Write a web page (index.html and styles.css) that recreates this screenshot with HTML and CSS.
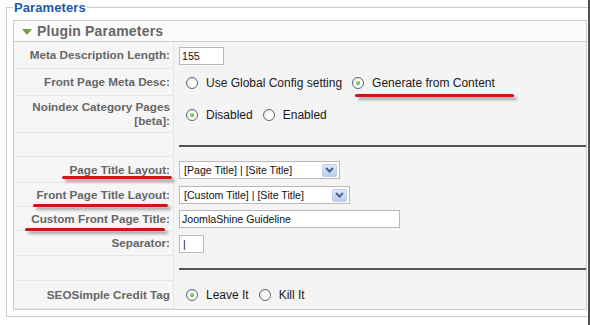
FILE: index.html
```html
<!DOCTYPE html>
<html>
<head>
<meta charset="utf-8">
<link rel="stylesheet" href="styles.css">
</head>
<body>
<div class="page">
  <fieldset class="params">
    <legend>Parameters</legend>
    <div class="panel">
      <div class="panel-title"><span class="tri"></span>Plugin Parameters</div>
      <div class="plist">
        <div class="key">Meta Description Length:</div>
        <div class="val"><span class="field w-len">155</span></div>

        <div class="key">Front Page Meta Desc:</div>
        <div class="val">
          <span class="radio"></span><span class="opt">Use Global Config setting</span>
          <span class="radio on next"></span><span class="opt">Generate from Content</span>
        </div>

        <div class="key two">Noindex Category Pages [beta]:</div>
        <div class="val">
          <span class="radio on"></span><span class="opt">Disabled</span>
          <span class="radio next"></span><span class="opt">Enabled</span>
        </div>

        <div class="key"></div>
        <div class="val"><span class="rule"></span></div>

        <div class="key">Page Title Layout:</div>
        <div class="val"><span class="select w-sel1"><span class="sel-text">[Page Title] | [Site Title]</span><span class="arrow"><svg width="9" height="6" viewBox="0 0 9 6"><path d="M1 1 L4.5 4.5 L8 1" fill="none" stroke="#4d6088" stroke-width="2"/></svg></span></span></div>

        <div class="key">Front Page Title Layout:</div>
        <div class="val"><span class="select w-sel2"><span class="sel-text">[Custom Title] | [Site Title]</span><span class="arrow"><svg width="9" height="6" viewBox="0 0 9 6"><path d="M1 1 L4.5 4.5 L8 1" fill="none" stroke="#4d6088" stroke-width="2"/></svg></span></span></div>

        <div class="key">Custom Front Page Title:</div>
        <div class="val"><span class="field w-title">JoomlaShine Guideline</span></div>

        <div class="key">Separator:</div>
        <div class="val"><span class="field w-sep">|</span></div>

        <div class="key"></div>
        <div class="val"><span class="rule"></span></div>

        <div class="key">SEOSimple Credit Tag</div>
        <div class="val">
          <span class="radio on"></span><span class="opt">Leave It</span>
          <span class="radio next"></span><span class="opt">Kill It</span>
        </div>
      </div>
    </div>
  </fieldset>

  <div class="mark m1"></div>
  <div class="mark m2"></div>
  <div class="mark m3"></div>
  <div class="mark m4"></div>
</div>
</body>
</html>
```

FILE: styles.css
```css
html, body {
  margin: 0;
  padding: 0;
  background: #ffffff;
}

.page {
  position: relative;
  width: 588px;
  height: 325px;
  overflow: hidden;
  border-right: 2px solid #4f4f4f;
  font-family: "Liberation Sans", Arial, sans-serif;
}

.params {
  margin: 0 0 0 6px;
  padding: 5px 6px 6px 6px;
  border: 1px solid #cccccc;
  width: 574px;
}

.params legend {
  padding: 0 1px;
  font-size: 13px;
  line-height: 15px;
  font-weight: bold;
  color: #1b5aa6;
  letter-spacing: 0.1px;
}

.panel {
  border: 1px solid #cccccc;
  background: #ffffff;
}

.panel-title {
  display: flex;
  align-items: center;
  height: 20px;
  padding-left: 8px;
  border-bottom: 1px solid #cccccc;
  background: #fbfbfb;
  font-size: 14px;
  font-weight: bold;
  color: #666666;
  letter-spacing: 0.2px;
}

.tri {
  width: 0;
  height: 0;
  border-left: 5px solid transparent;
  border-right: 5px solid transparent;
  border-top: 6px solid #6ea23c;
  margin-right: 5px;
  margin-top: 1px;
}

.plist {
  display: grid;
  grid-template-columns: 160px 1fr;
  grid-template-rows: 27px 27px 37px 24px 26px 24px 24px 25px 25px 28px;
  background: #f4f4f4;
}

.key {
  display: flex;
  align-items: center;
  justify-content: flex-end;
  text-align: right;
  padding-right: 3px;
  border-right: 1px solid #e6e6e6;
  border-bottom: 1px solid #e6e6e6;
  font-size: 11.7px;
  line-height: 14px;
  font-weight: bold;
  color: #666666;
  background: #f6f6f6;
}

.key.two {
  padding-left: 10px;
}

.val {
  display: flex;
  align-items: center;
  padding-left: 5px;
  font-size: 12px;
  color: #1a1a1a;
}

.field,
.select {
  box-sizing: border-box;
  display: flex;
  align-items: center;
  height: 18px;
  background: #ffffff;
  border: 1px solid #b9b9b9;
  font-size: 10.6px;
  color: #111111;
  padding-left: 2px;
}

.w-len { width: 45px; }
.w-title { width: 221px; }
.w-sep { width: 25px; padding-left: 3px; }
.w-sel1 { width: 161px; }
.w-sel2 { width: 171px; }

.select {
  padding-left: 4px;
  padding-right: 2px;
}

.sel-text {
  flex: 1;
}

.arrow {
  box-sizing: border-box;
  display: flex;
  align-items: center;
  justify-content: center;
  width: 15px;
  height: 13px;
  border: 1px solid #bccdf0;
  border-radius: 2px;
  background: linear-gradient(#dfe8fb, #b9ccf1);
}

.radio {
  box-sizing: border-box;
  position: relative;
  width: 12px;
  height: 12px;
  margin-left: 7px;
  margin-right: 8px;
  border: 1px solid #5d6773;
  border-radius: 50%;
  background: radial-gradient(circle at 60% 60%, #ffffff 35%, #dadada 100%);
}

.radio.next {
  margin-left: 10px;
}

.radio.on::after {
  content: "";
  position: absolute;
  left: 3px;
  top: 3px;
  width: 4px;
  height: 4px;
  border-radius: 50%;
  background: radial-gradient(circle at 40% 40%, #9be07a, #2f9a22);
}

.opt {
  white-space: nowrap;
}

.rule {
  flex: 1;
  height: 0;
  border-top: 2px solid #555555;
  margin-top: 1px;
}

.mark {
  position: absolute;
  height: 3px;
  background: #d11414;
  border-radius: 2px;
  box-shadow: 3px 3px 3px rgba(0, 0, 0, 0.35);
}

.m1 { left: 355px; top: 94px; width: 159px; }
.m2 { left: 62px; top: 176px; width: 110px; }
.m3 { left: 33px; top: 204px; width: 135px; }
.m4 { left: 25px; top: 228px; width: 140px; }
```
